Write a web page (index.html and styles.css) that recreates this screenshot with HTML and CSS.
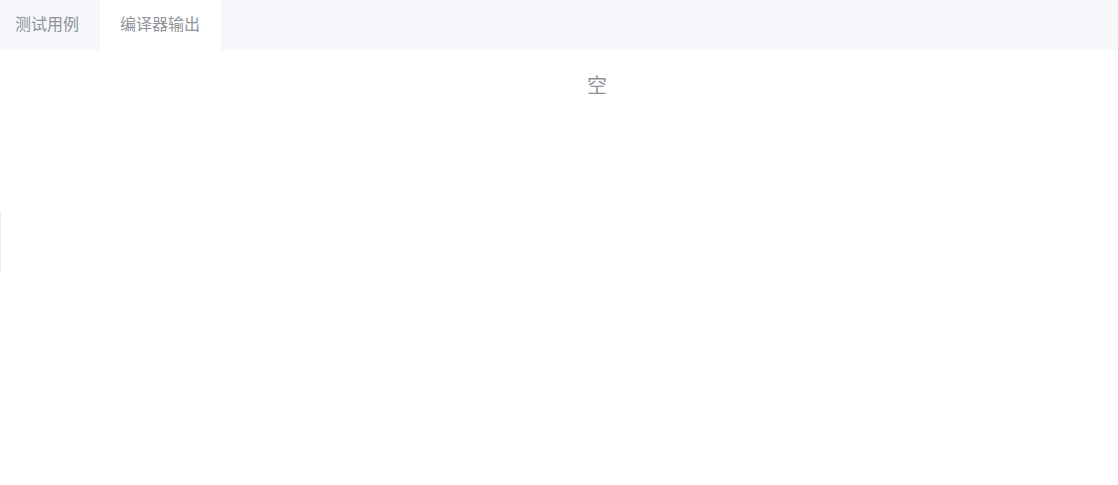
FILE: index.html
```html
<!DOCTYPE html>
<html lang="zh">

<head>
    <meta charset="UTF-8">
    <meta name="viewport" content="width=device-width, initial-scale=1.0">
    <title>输出</title>
    <link rel="stylesheet" href="styles.css">
</head>

<body>
    <div class="panel">
        <div class="tabs">
            <div class="tab">测试用例</div>
            <div class="tab active">编译器输出</div>
        </div>
        <div class="output">
            <div class="empty">空</div>
        </div>
        <div class="edge"></div>
    </div>
</body>

</html>
```

FILE: styles.css
```css
*{margin: 0px;padding: 0px;box-sizing: border-box;font-family: "Liberation Sans", "Noto Sans CJK SC", sans-serif;}
body{background: #fff;}
.panel{position: relative;width: 100vw;height: 100vh;}
.tabs{display: flex;height: 50px;background: #f5f7fa;}
.tab{padding: 0 21px 0 20px;line-height: 50px;font-size: 16px;color: #909399;}
.tab:first-child{padding-left: 15px;}
.tab.active{background: #fff;}
.output{padding: 22px 0 0 76px;text-align: center;}
.empty{font-size: 20px;line-height: 28px;color: #909399;}
.edge{position: absolute;left: 0;top: 212px;width: 1px;height: 60px;background: #ebeef5;}
```
